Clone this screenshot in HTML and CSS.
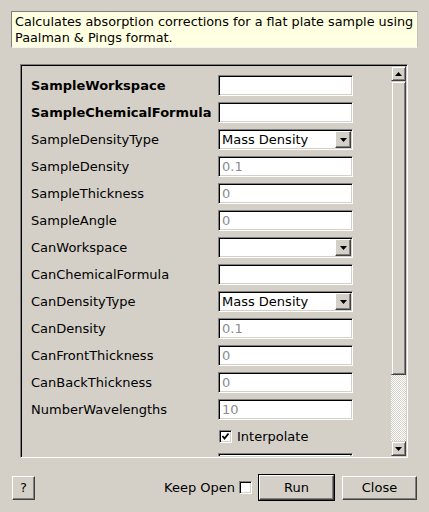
FILE: index.html
```html
<!DOCTYPE html>
<html>
<head>
<meta charset="utf-8">
<link rel="stylesheet" href="styles.css">
</head>
<body>
<div class="dialog">
  <div class="info">Calculates absorption corrections for a flat plate sample using<br>Paalman &amp; Pings format.</div>
  <div class="frame">
    <div class="content">
      <div class="form">
        <div class="label bold">SampleWorkspace</div><div class="field"></div>
        <div class="label bold">SampleChemicalFormula</div><div class="field"></div>
        <div class="label">SampleDensityType</div><div class="field combo"><span class="ctext">Mass Density</span><span class="dropbtn"><svg width="7" height="4" viewBox="0 0 7 4"><path d="M0 0H7L3.5 4Z" fill="#000"/></svg></span></div>
        <div class="label">SampleDensity</div><div class="field"><span class="val">0.1</span></div>
        <div class="label">SampleThickness</div><div class="field"><span class="val">0</span></div>
        <div class="label">SampleAngle</div><div class="field"><span class="val">0</span></div>
        <div class="label">CanWorkspace</div><div class="field combo"><span class="ctext"></span><span class="dropbtn"><svg width="7" height="4" viewBox="0 0 7 4"><path d="M0 0H7L3.5 4Z" fill="#000"/></svg></span></div>
        <div class="label">CanChemicalFormula</div><div class="field"></div>
        <div class="label">CanDensityType</div><div class="field combo"><span class="ctext">Mass Density</span><span class="dropbtn"><svg width="7" height="4" viewBox="0 0 7 4"><path d="M0 0H7L3.5 4Z" fill="#000"/></svg></span></div>
        <div class="label">CanDensity</div><div class="field"><span class="val">0.1</span></div>
        <div class="label">CanFrontThickness</div><div class="field"><span class="val">0</span></div>
        <div class="label">CanBackThickness</div><div class="field"><span class="val">0</span></div>
        <div class="label">NumberWavelengths</div><div class="field"><span class="val">10</span></div>
        <div class="label"></div><div class="checkrow"><span class="check"><svg width="9" height="9" viewBox="0 0 9 9"><path d="M1.5 4 L3.5 6.5 L7.5 1.5" fill="none" stroke="#000" stroke-width="1.8"/></svg></span><span>Interpolate</span></div>
        <div class="label">Emode</div><div class="field combo"><span class="ctext">Elastic</span><span class="dropbtn"><svg width="7" height="4" viewBox="0 0 7 4"><path d="M0 0H7L3.5 4Z" fill="#000"/></svg></span></div>
      </div>
    </div>
    <div class="scrollbar">
      <div class="sbtn"><svg width="7" height="4" viewBox="0 0 7 4"><path d="M3.5 0L7 4H0Z" fill="#000"/></svg></div>
      <div class="thumb"></div>
      <div class="track"></div>
      <div class="sbtn"><svg width="7" height="4" viewBox="0 0 7 4"><path d="M0 0H7L3.5 4Z" fill="#000"/></svg></div>
    </div>
  </div>
  <div class="footer">
    <div class="btn help">?</div>
    <div class="spacer"></div>
    <span class="keep">Keep Open</span>
    <span class="check keepbox"></span>
    <div class="default"><div class="btn run">Run</div></div>
    <div class="btn close">Close</div>
  </div>
</div>
</body>
</html>
```
FILE: styles.css
```css
html, body {
  margin: 0;
  padding: 0;
}
body {
  width: 429px;
  height: 512px;
  overflow: hidden;
  background: #d4d0c8;
  font-family: "DejaVu Sans", sans-serif;
  font-size: 13px;
  color: #000;
}
.dialog {
  padding: 11px 11px 0 11px;
}
.info {
  box-sizing: border-box;
  height: 37px;
  background: #ffffe1;
  border: 1px solid;
  border-color: #808080 #c0c0c0 #f4f4f4 #808080;
  padding: 2px 3px 0 3px;
  font-size: 12.8px;
  line-height: 16px;
  white-space: nowrap;
  overflow: hidden;
}
.frame {
  box-sizing: border-box;
  margin: 16px 0 0 9px;
  width: 388px;
  height: 394px;
  border: 1px solid;
  border-color: #808080 #fff #fff #808080;
  box-shadow: inset 1px 1px 0 #000;
  padding: 1px 1px 1px 1px;
  display: flex;
}
.content {
  flex: 1;
  overflow: hidden;
  padding: 9px 0 0 9px;
}
.form {
  display: grid;
  grid-template-columns: 187px 135px;
  grid-auto-rows: 21px;
  row-gap: 6px;
  align-items: center;
}
.label {
  white-space: nowrap;
}
.bold {
  font-weight: bold;
}
.field {
  box-sizing: border-box;
  height: 21px;
  background: #fff;
  border: 1px solid;
  border-color: #808080 #fff #fff #808080;
  box-shadow: inset 1px 1px 0 #000, inset -1px -1px 0 #d4d0c8;
  padding: 1px;
  display: flex;
  align-items: center;
}
.val {
  color: #8c8c8c;
  padding-left: 2px;
}
.ctext {
  flex: 1;
  padding-left: 2px;
}
.dropbtn {
  box-sizing: border-box;
  width: 16px;
  height: 17px;
  background: #d4d0c8;
  border: 1px solid;
  border-color: #fff #404040 #404040 #fff;
  box-shadow: inset -1px -1px 0 #808080;
  display: flex;
  align-items: center;
  justify-content: center;
}
.checkrow {
  display: flex;
  align-items: center;
  gap: 5px;
  padding-left: 1px;
}
.check {
  box-sizing: border-box;
  width: 13px;
  height: 13px;
  background: #fff;
  border: 1px solid;
  border-color: #808080 #fff #fff #808080;
  box-shadow: inset 1px 1px 0 #000, inset -1px -1px 0 #d4d0c8;
  display: flex;
  align-items: center;
  justify-content: center;
}
.check svg {
  display: block;
}
.scrollbar {
  width: 15px;
  display: flex;
  flex-direction: column;
}
.sbtn {
  box-sizing: border-box;
  height: 15px;
  background: #d4d0c8;
  border: 1px solid;
  border-color: #d4d0c8 #404040 #404040 #d4d0c8;
  box-shadow: inset 1px 1px 0 #fff, inset -1px -1px 0 #808080;
  display: flex;
  align-items: center;
  justify-content: center;
}
.thumb {
  box-sizing: border-box;
  height: 294px;
  background: #d4d0c8;
  border: 1px solid;
  border-color: #d4d0c8 #404040 #404040 #d4d0c8;
  box-shadow: inset 1px 1px 0 #fff, inset -1px -1px 0 #808080;
}
.track {
  flex: 1;
  background: repeating-conic-gradient(#fff 0 25%, #d4d0c8 0 50%) 0 0 / 2px 2px;
}
.footer {
  margin: 16px 1px 0 1px;
  height: 27px;
  display: flex;
  align-items: center;
}
.btn {
  box-sizing: border-box;
  height: 24px;
  background: #d4d0c8;
  border: 1px solid;
  border-color: #fff #404040 #404040 #fff;
  box-shadow: inset -1px -1px 0 #808080;
  display: flex;
  align-items: center;
  justify-content: center;
}
.help {
  width: 23px;
}
.spacer {
  flex: 1;
}
.keep {
  margin-right: 4px;
}
.keepbox {
  margin-right: 6px;
}
.default {
  box-sizing: border-box;
  border: 1px solid #000;
  width: 77px;
  height: 27px;
  margin-right: 7px;
}
.run {
  width: 75px;
  height: 25px;
}
.close {
  width: 75px;
}
```
